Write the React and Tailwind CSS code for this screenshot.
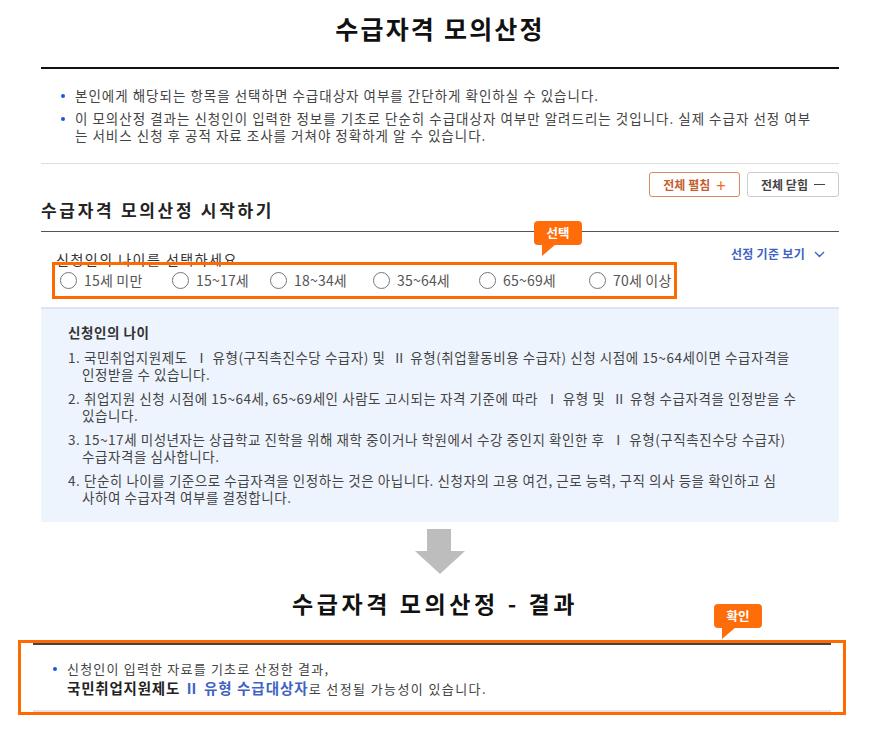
import React from "react";

const font = { fontFamily: '"Noto Sans CJK KR", "Noto Sans", sans-serif' };

function Radio({ label, w }) {
  return (
    <label className={`flex items-center gap-[7px] ${w}`}>
      <span className="w-[17px] h-[17px] rounded-full border border-[#777] bg-white shrink-0" />
      <span className="text-[14px] text-[#555] tracking-[0.2px]">{label}</span>
    </label>
  );
}

function Tip({ text, className }) {
  return (
    <div className={`absolute ${className}`}>
      <div className="relative bg-[#ff6d0a] text-white text-[12.5px] font-bold rounded-[4px] w-[48px] h-[24px] flex items-center justify-center">
        {text}
        <span className="absolute left-[8px] top-[23px] w-0 h-0 border-r-[14px] border-r-transparent border-t-[12px] border-t-[#ff6d0a]" />
      </div>
    </div>
  );
}

export default function App() {
  return (
    <div className="w-[875px] h-[748px] bg-white overflow-hidden relative text-[#333]" style={font}>
      <div className="ml-[41px] w-[798px]">
        <h1 className="text-center text-[25px] font-bold text-[#111] pt-[12px] leading-[32px] tracking-[2.2px]">수급자격 모의산정</h1>
        <div className="mt-[23px] border-t-2 border-[#111]" />
        <ul className="pt-[18px] pb-[19px] pl-[20px] flex flex-col gap-[6px] text-[13.5px] text-[#444] leading-[17px] tracking-[1px]">
          <li className="relative pl-[14px]">
            <span className="absolute left-0 top-[7px] w-[4px] h-[4px] rounded-full bg-[#1a5ad8]" />
            본인에게 해당되는 항목을 선택하면 수급대상자 여부를 간단하게 확인하실 수 있습니다.
          </li>
          <li className="relative pl-[14px]">
            <span className="absolute left-0 top-[7px] w-[4px] h-[4px] rounded-full bg-[#1a5ad8]" />
            <span className="whitespace-nowrap">이 모의산정 결과는 신청인이 입력한 정보를 기초로 단순히 수급대상자 여부만 알려드리는 것입니다. 실제 수급자 선정 여부</span>
            <br />는 서비스 신청 후 공적 자료 조사를 거쳐야 정확하게 알 수 있습니다.
          </li>
        </ul>
        <div className="border-t border-[#ddd]" />
        <div className="flex justify-end gap-[7px] mt-[8px]">
          <button className="h-[25px] w-[91px] border border-[#d98a62] rounded-[3px] text-[12px] text-[#c4602f] font-semibold flex items-center justify-center gap-[6px]">
            전체 펼침 <span className="text-[#f26b1d] text-[17px] font-normal leading-none">+</span>
          </button>
          <button className="h-[25px] w-[92px] border border-[#ccc] rounded-[3px] text-[12px] text-[#444] font-semibold flex items-center justify-center gap-[6px]">
            전체 닫힘 <span className="inline-block w-[11px] h-[1.5px] bg-[#444]" />
          </button>
        </div>
        <h2 className="mt-[2px] text-[17px] font-semibold text-[#222] leading-[22px] tracking-[2.7px]">수급자격 모의산정 시작하기</h2>
        <div className="mt-[10px] border-t border-[#555]" />
        <div className="relative h-[75px]">
          <div className="flex items-start justify-between pl-[15px] pr-[14px] pt-[18px]">
            <p className="text-[14px] text-[#333] leading-[18px] tracking-[1.5px]">신청인의 나이를 선택하세요.</p>
            <span className="flex items-center gap-[9px] text-[12px] font-bold text-[#3f63c4] leading-[18px] -mt-[5px] tracking-[0.3px]">
              선정 기준 보기
              <svg width="11" height="7" viewBox="0 0 11 7" fill="none" stroke="#3f63c4" strokeWidth="1.4"><path d="M1 1l4.5 4.5L10 1" /></svg>
            </span>
          </div>
          <div className="flex items-center pl-[19px] mt-[2px]">
            <Radio label="15세 미만" w="w-[112px]" />
            <Radio label="15~17세" w="w-[98px]" />
            <Radio label="18~34세" w="w-[103px]" />
            <Radio label="35~64세" w="w-[106px]" />
            <Radio label="65~69세" w="w-[110px]" />
            <Radio label="70세 이상" w="w-[90px]" />
          </div>
        </div>
        <div className="bg-[#eef4fe] border-t-2 border-[#dbe4f6] pt-[15px] pb-[16px] pl-[27px] pr-[10px] text-[13.5px] text-[#444] leading-[17px] tracking-[0.55px] whitespace-nowrap">
          <p className="font-semibold text-[#333] mb-[8px]">신청인의 나이</p>
          <ol className="flex flex-col gap-[7px]">
            <li className="pl-[14px] -indent-[14px]">1. 국민취업지원제도 &nbsp;Ⅰ 유형(구직촉진수당 수급자) 및 &nbsp;Ⅱ 유형(취업활동비용 수급자) 신청 시점에 15~64세이면 수급자격을<br />인정받을 수 있습니다.</li>
            <li className="pl-[14px] -indent-[14px]">2. 취업지원 신청 시점에 15~64세, 65~69세인 사람도 고시되는 자격 기준에 따라 &nbsp;Ⅰ 유형 및 &nbsp;Ⅱ 유형 수급자격을 인정받을 수<br />있습니다.</li>
            <li className="pl-[14px] -indent-[14px]">3. 15~17세 미성년자는 상급학교 진학을 위해 재학 중이거나 학원에서 수강 중인지 확인한 후 &nbsp;Ⅰ 유형(구직촉진수당 수급자)<br />수급자격을 심사합니다.</li>
            <li className="pl-[14px] -indent-[14px]">4. 단순히 나이를 기준으로 수급자격을 인정하는 것은 아닙니다. 신청자의 고용 여건, 근로 능력, 구직 의사 등을 확인하고 심<br />사하여 수급자격 여부를 결정합니다.</li>
          </ol>
        </div>
        <div className="flex justify-center pt-[7px]">
          <svg width="50" height="45" viewBox="0 0 50 45"><path d="M12 0h24v22h14L25 45 0 22h12z" fill="#bdbdbd" /></svg>
        </div>
        <h2 className="text-center text-[23px] font-bold text-[#111] mt-[14px] leading-[30px] tracking-[3.6px] pr-[10px]">수급자격 모의산정 - 결과</h2>
      </div>
      <div className="ml-[18px] w-[828px] mt-[22px] border-[3px] border-[#ff6a00] h-[75px] px-[12px]">
        <div className="border-t-2 border-[#444]" />
        <div className="h-[67px] border-b-2 border-[#e2e2e2] pl-[20px] pt-[15px] text-[#444]">
          <div className="relative pl-[14px]">
            <span className="absolute left-0 top-[7px] w-[4px] h-[4px] rounded-full bg-[#1a5ad8]" />
            <p className="text-[13px] leading-[18px] tracking-[1.2px]">신청인이 입력한 자료를 기초로 산정한 결과,</p>
            <p className="text-[13px] leading-[19px] tracking-[1.4px] whitespace-nowrap"><span className="text-[14.5px] font-bold text-[#222] tracking-[0.8px]">국민취업지원제도 </span><span className="text-[14.5px] font-bold text-[#3f63c4] tracking-[1px]">Ⅱ 유형 수급대상자</span>로 선정될 가능성이 있습니다.</p>
          </div>
        </div>
      </div>
      <div className="absolute left-[52px] top-[262px] w-[625px] h-[37px] border-[3px] border-[#ff6a00]" />
      <Tip text="선택" className="left-[534px] top-[221px]" />
      <Tip text="확인" className="left-[714px] top-[604px]" />
    </div>
  );
}
